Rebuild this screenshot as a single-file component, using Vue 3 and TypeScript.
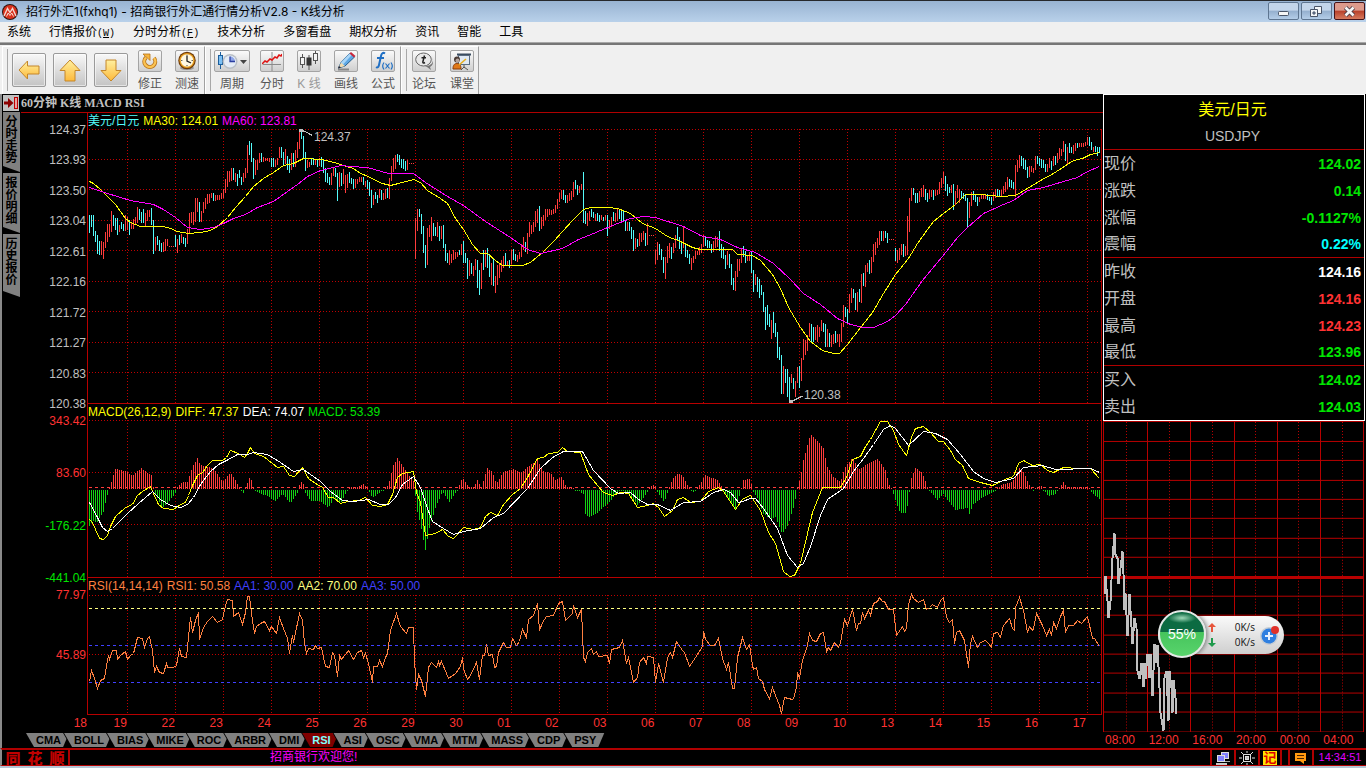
<script setup lang="ts">
interface Segment {
  first: number
  top: number
  bars: string
}
interface Trace {
  left: number
  top: number
  points: string
}
interface Candle {
  x: number
  y: number
  h: number
  kind: string
}

// Samples are stored at three units per pixel, relative to the segment origin.
const UNIT = 3
const FIRST_X = 89
const STEP = 2

const menus = [
  { label: '系统', key: '' },
  { label: '行情报价', key: 'W' },
  { label: '分时分析', key: 'F' },
  { label: '技术分析', key: '' },
  { label: '多窗看盘', key: '' },
  { label: '期权分析', key: '' },
  { label: '资讯', key: '' },
  { label: '智能', key: '' },
  { label: '工具', key: '' },
]

const segments: Segment[] = [
  {
    first: 0,
    top: 90,
    bars:
      'c375-428 375-412 375-437 423-455 435-493 453-495 r453-495 455-507 425-475 402-457 402-440 363-425 c375-407 383-420 383-435 r405-425 c397-417 402-423 r375-423 380-420 c390-435 r400-417 387-417 380-405 350-400 c357-390 365-400 357-400 r370-410 360-392 360-380 c353-405 390-492 r440-482 c437-465 450-482 460-487 r455-487 447-482 447-468 d468-471 468-471 468-471 c435-470 r447-490 c435-465 r433-460 c440-462 443-470 r417-462 370-430 365-400 365-405 323-395 323-367 c335-395 r363-397 335-370 325-357 313-343 313-340 308-325 c308-333 r315-333 315-330 315-330 310-328 298-325 267-310 243-290 243-275 233-272 c235-270 r250-275 c253-287 240-265 262-285 r250-277 233-265 165-250 c153-195 160-215 205-267 r210-255 210-240 190-220 c190-215 r200-215 203-213 203-213 203-215 c203-230 203-230 r210-230 205-225 170-205 c172-203 185-225 r177-223 c197-240 207-250 r190-240 c190-230 r180-230 155-205 125-178 c120-147 137-205 187-243 r210-235 215-230 c205-225 205-225 r210-225 c210-230 r205-227 c200-230 210-250 233-275 250-280 260-285 r250-285 233-257 c233-260 250-333 r245-290',
  },
  {
    first: 126,
    top: 120,
    bars:
      'c158-198 r147-192 165-218 163-205 c155-190 173-193 177-207 r178-205 178-193 172-187 170-187 c172-195 r183-202 c180-207 187-228 210-263 r225-255 c215-237 225-248 r207-233 c210-240 r220-240 207-237 c203-233 r173-237 137-182 115-155 105-147 c102-125 105-135 117-143 118-147 123-152 r120-150 d130-133 130-133 130-133 r293-417 267-333 c267-290 282-342 318-400 375-443 r323-435 315-350 290-362 c308-347 320-347 r305-350 c318-362 r318-357 c315-383 373-423 398-430 r390-435 402-430 390-420 395-417 395-410 c390-405 r372-405 c362-430 398-428 413-477 r420-467 c430-462 r437-468 417-450 c420-503 450-525 r428-507 c390-450 r390-440 c383-443 402-470 r430-495 c415-497 r467-518 435-495 430-475 420-457 407-443 c398-435 r422-437 c420-443 r390-433 c387-420 402-423 r405-425 395-417 372-410 350-390 c365-397 r340-402 305-350 315-343 305-335 273-320 267-308 c258-333 r290-327 285-317 267-300 267-290 267-285 270-285 268-283 255-278 237-267 218-247 210-237 c210-240 225-248 r225-248 220-243 213-240 185-230 c180-208 195-225 r197-218 192-210 c155-310 273-312 r280-318 272-303 c267-290 275-293 r282-302 c280-302 285-305 r285-300 c290-302 r285-300 c285-347 r300-328 290-322 c277-302 r280-305 265-303 c268-298 270-305 273-305 300-333 r307-333 c307-333 322-357 330-392 r355-388 c357-380 r340-377 340-365 333-360 c340-378 r310-375 d346-349 346-349 346-349 r390-432 365-420 c372-405 387-420 410-458 r410-477 377-430 370-413 c380-417 r370-398 345-385 c320-360 352-387 365-402 r322-383 c370-410 390-413 403-432 r413-450 407-430 393-417 393-405 380-405',
  },
  {
    first: 306,
    top: 120,
    bars:
      'r372-400 345-380 c350-377 360-385 363-385 372-400 r362-395 347-383 350-380 c333-392 373-413 380-417 405-447 r392-435 c403-443 432-495 473-510 r453-513 417-470 417-453 385-430 c377-410 393-428 r407-423 397-423 c397-458 450-517 r462-495 c470-517 477-535 495-525 517-575 562-630 555-615 582-620 r600-657 c577-640 610-652 635-713 682-720 705-822 r738-822 c747-788 747-830 770-850 r762-790 c773-807 r783-830 740-790 c738-805 r713-783 657-720 660-705 645-693 610-650 c612-665 620-667 r622-660 615-665 620-650 600-633 c608-637 612-680 r628-680 c640-682 r645-682 642-673 c633-668 r643-665 642-680 608-665 555-620 c560-592 568-613 r522-580 503-548 c507-535 520-570 r515-575 c507-547 r462-550 c458-497 r435-500 430-457 c420-463 r410-458 372-427 365-405 353-385 333-375 c333-362 r333-362 c333-353 340-368 d358-361 358-361 358-361 c385-422 r390-430 385-420 373-405 c373-410 r378-407 288-405 235-335 205-243 c205-225 218-248 218-248 r213-245 205-230 195-230 c207-240 220-245 r210-238 210-230 c210-240 r210-228 210-225 185-223 173-205 155-192 c167-213 193-227 200-220 r195-220 c192-270 r213-255 195-235 208-250 c213-233 220-237 225-243 235-323 r245-293 215-258 c213-240 225-247 230-258 r230-247 225-237 222-237 223-237 c223-240 230-243 232-255 r215-243 208-235 c207-230 210-230 r210-228 197-223 187-215 170-207 c178-200 180-205 185-207 r135-230 120-155 105-143 c107-137 113-147 120-150 140-173 r137-170 137-155 143-160 108-150 c108-133 113-137 117-143 120-143 133-155 r133-155 113-143 c122-150 r107-137 c107-135 r100-130 83-117 87-108 63-95 c72-122 r80-133 c68-98 82-100 r75-102 68-93 c68-85 r68-80 68-82 70-80 65-77 50-75 c50-78 65-90 r80-97 c77-97 80-107 80-100',
  },
]

const candles: Candle[] = segments.flatMap((seg) => {
  let kind = 'r'
  return seg.bars.split(' ').map((token, i) => {
    if (/[a-z]/.test(token[0])) {
      kind = token[0]
      token = token.slice(1)
    }
    const [hi, lo] = token.split('-').map(Number)
    const y = Math.round(seg.top + hi / UNIT)
    return {
      x: FIRST_X + STEP * (seg.first + i),
      y,
      h: Math.max(1, Math.round(seg.top + lo / UNIT) - y),
      kind,
    }
  })
})

function toPoints(traces: Trace[]): number[][] {
  return traces.flatMap((t) =>
    t.points.split(' ').map((p) => {
      const [x, y] = p.split(',').map(Number)
      return [Math.round(t.left + x / UNIT), Math.round(t.top + y / UNIT)]
    }),
  )
}
function line(traces: Trace[]): string {
  return toPoints(traces)
    .map(([x, y]) => `${x + 0.5},${y + 0.5}`)
    .join(' ')
}

const ma30 = line([
  { left: 0, top: 90, points: '268,273 280,278 300,297 325,320 345,342 360,363 375,385 390,397 420,409 490,409 510,415 530,424 565,430 600,426 630,420 650,408 680,380 705,352 735,318 760,288 790,265 820,247 850,225 880,220 908,203 965,206 1010,218' },
  { left: 340, top: 120, points: '10,136 40,145 60,160 85,168 100,178 125,190 150,196 175,188 220,176 240,187 260,210 300,233 320,250 345,293 370,328 395,373 420,400 440,400 465,420 485,434 515,436 545,436 570,427 605,396 640,363 665,333 700,297 730,267 750,260 800,260 830,265 870,280 905,308 945,323 980,348 1020,362 1055,382' },
  { left: 700, top: 120, points: '0,386 95,388 110,402 155,406 180,420 215,462 240,503 265,560 300,620 330,663 365,690 400,700 418,698 440,673 470,633 515,575 550,520 585,462 625,413 650,370 680,327 700,303 730,280 765,252 795,221 840,222 900,227 945,224 980,203 1020,180 1060,158 1120,120 1145,115 1170,103 1198,97' },
])
const ma60 = line([
  { left: 0, top: 90, points: '268,290 320,310 390,330 460,343 490,357 525,382 560,410 600,418 640,412 670,400 700,383 735,373 770,352 820,332 860,302 890,281 920,257 960,240 1000,230' },
  { left: 340, top: 120, points: '0,136 30,138 80,140 145,160 220,160 255,187 320,227 370,255 435,302 510,350 560,388 600,398 665,385 715,356 760,338 815,315 870,295 910,289 945,290 1030,317 1080,346' },
  { left: 700, top: 120, points: '10,348 60,358 110,380 165,396 220,430 270,478 310,520 360,553 410,593 450,612 490,621 520,621 560,602 585,585 615,553 665,480 725,408 770,352 800,322 850,280 910,253 940,240 980,210 1030,200 1090,184 1130,170 1160,154 1198,139' },
])
const diff = line([
  { left: 0, top: 400, points: '268,358 275,365 285,388 298,413 310,418 320,405 330,378 345,348 375,320 395,312 412,285 425,272 450,258 460,280 475,312 490,325 520,328 540,312 555,305 565,285 575,255 590,225 605,215 620,195 635,180 665,180 678,170 690,150 715,158 732,172 740,160 750,142 762,158 790,168 815,188 830,202 850,198 868,226 882,228 905,200 925,235 945,250 965,262 985,292 1000,292 1020,308 1040,302 1075,300 1095,292 1115,315' },
  { left: 380, top: 400, points: '0,317 20,313 35,283 50,230 65,218 98,214 108,275 120,305 135,405 165,398 185,388 205,408 218,415 235,400 250,380 280,388 300,380 315,348 330,335 350,345 370,312 395,283 420,265 440,230 470,175 490,172 505,158 530,155 545,142 560,154 600,156 612,190 625,222 650,255 670,275 695,286 720,275 745,280 770,322 800,316 820,308 835,322 852,347 875,330 890,298 910,292 930,305 960,303 985,272 1015,260 1030,272 1065,328 1085,298' },
  { left: 740, top: 400, points: '15,292 30,285 60,330 85,395 105,428 118,470 130,513 148,528 162,525 180,490 200,400 215,335 235,290 245,260 300,262 318,230 335,178 360,168 375,138 390,118 420,62 440,62 460,90 475,132 498,166 512,112 525,83 550,79 570,97 595,122 610,122 630,150 645,178 665,195 685,235 720,246 757,254 800,233 820,227 835,190 850,180 875,195 900,193 920,211 940,215 970,201 1010,204 1050,203 1078,233' },
])
const dea = line([
  { left: 0, top: 400, points: '268,305 290,350 305,382 320,392 335,385 380,340 415,310 455,273 480,297 510,316 540,320 560,311 580,290 600,253 630,213 655,193 685,178 710,161 740,163 760,156 800,163 840,185 880,214 910,208 960,243 990,273 1025,299 1060,302 1105,296' },
  { left: 380, top: 400, points: '0,312 25,312 45,290 65,253 98,227 120,262 140,325 155,362 190,383 220,403 250,392 300,384 340,352 370,340 440,265 480,205 515,172 550,154 605,154 640,210 690,263 715,278 750,277 775,298 800,313 830,313 870,331 910,306 960,302 1000,275 1030,268 1050,275 1075,305' },
  { left: 740, top: 400, points: '5,303 30,295 45,295 70,325 110,385 140,465 170,502 190,488 210,437 240,345 260,298 310,265 340,213 370,175 400,133 430,88 450,75 465,85 505,135 550,92 585,98 620,117 660,163 700,213 730,235 765,247 820,235 850,202 905,195 945,208 1050,203 1078,216' },
])
const rsi = line([
  { left: 0, top: 570, points: '268,332 274,300 282,325 292,355 300,330 312,325 318,285 323,255 328,268 335,240 347,240 352,268 360,255 375,243 382,268 390,255 398,250 412,200 425,205 431,232 440,203 448,197 455,240 461,305 467,287 478,305 490,310 497,280 502,290 520,290 527,285 538,235 544,258 557,262 563,200 569,142 575,185 585,150 593,125 598,207 608,170 620,152 635,138 650,156 665,147 675,105 682,87 695,90 700,137 713,125 725,163 735,125 742,77 748,77 755,150 761,190 767,168 780,158 792,152 808,180 814,168 828,190 838,140 850,175 862,205 868,248 875,195 880,215 898,130 905,150 912,220 917,248 925,235 938,238 945,225 952,235 962,230 968,262 975,287 987,290 995,245 1003,255 1012,317 1018,255 1022,268 1043,240 1060,268 1072,247 1083,240 1090,262 1096,250 1105,280 1115,335 1120,287 1130,288 1138,270 1145,288 1155,262 1162,250 1170,180' },
  { left: 380, top: 400, points: '47,640 60,677 78,698 85,682 100,682 103,780 107,868 113,823 122,840 135,888 143,800 152,785 167,802 173,782 178,795 184,783 197,820 205,833 225,820 240,798 245,772 250,805 262,838 270,825 287,785 298,838 305,765 311,765 317,732 325,765 335,763 342,800 348,798 355,755 370,727 378,742 390,740 397,715 407,735 418,722 427,687 437,710 443,657 460,645 472,608 478,690 485,667 497,647 520,645 535,610 545,602 555,660 575,640 580,615 592,650 603,627 608,770 616,783 622,755 633,745 640,763 647,752 655,768 680,765 687,790 694,748 716,742 726,720 737,790 743,770 760,845 772,832 778,785 790,770 797,790 802,768 820,770 826,845 833,790 850,845 862,770 870,755 875,770 887,722 905,750 912,755 928,797 945,770 965,737 970,693 975,717 990,735 1002,735 1013,713 1025,775 1037,808 1043,785 1055,863 1061,865 1072,770' },
  { left: 740, top: 400, points: '5,710 18,748 28,733 36,795 40,808 47,800 55,833 65,843 72,868 88,893 95,862 110,900 118,915 124,940 131,892 155,897 160,895 168,860 172,817 178,835 185,780 200,735 208,698 215,720 227,722 240,700 250,695 257,753 263,740 270,750 282,727 295,742 300,725 311,657 322,675 335,627 347,690 353,668 360,670 365,635 371,655 383,630 390,645 400,610 412,603 418,590 425,602 432,602 443,628 460,628 467,705 475,697 485,677 492,692 498,685 505,613 514,583 520,595 533,605 550,597 557,627 567,622 575,613 592,622 600,600 610,590 617,650 628,667 635,657 641,730 647,697 657,690 673,720 683,800 690,730 695,707 712,740 720,727 735,720 745,728 753,742 760,700 770,697 780,710 790,675 808,653 815,683 821,690 826,620 838,592 850,630 862,695 868,677 875,690 880,685 887,640 905,675 918,705 928,687 934,705 940,665 947,683 960,647 970,630 976,697 983,675 1000,675 1010,660 1022,670 1042,648 1055,713 1062,713 1078,737' },
])
const intraday = line([
  { left: 1100, top: 410, points: '12,548 16,495 20,570 24,622 30,570 36,440 41,365 46,430 50,440 55,520 60,470 65,420 68,490 72,598 76,545 82,675 88,550 94,648 97,700 101,620 108,650 112,780 118,805 122,755 128,828 132,755 136,805 140,728 146,800 150,730 157,855 162,700 167,755 172,702 176,830 181,905 188,960 192,800 198,780 205,930 208,780 213,830 217,905 220,806 224,860 227,908' },
])

// MACD histogram: envelope points expanded to one bar per candle.
const ZERO_Y = 489
const envelope = toPoints([
  { left: 0, top: 400, points: '268,375 275,360 290,362 300,345 310,333 318,295 324,268 330,255 345,207 375,213 395,227 412,213 422,205 440,220 452,225 460,262 466,280 485,320 500,305 525,275 532,262 545,245 560,245 575,200 592,173 600,195 640,205 665,247 690,220 705,240 718,262 728,275 740,250 750,228 760,262 775,275 800,285 825,300 845,280 870,305 890,275 895,262 905,240 915,275 930,300 960,300 985,320 1000,295 1020,310 1045,262 1075,262 1090,252 1105,268 1115,290' },
  { left: 380, top: 400, points: '10,268 25,255 40,195 52,173 70,200 90,235 103,245 107,320 120,370 136,447 148,380 165,320 185,272 207,302 225,275 235,262 247,232 265,260 278,262 290,240 302,262 320,205 335,215 347,252 370,215 400,208 420,218 450,195 470,180 490,212 510,220 525,240 545,232 558,262 575,264 598,270 608,280 615,340 625,348 650,335 690,300 720,265 750,285 770,312 790,290 810,262 822,252 835,280 852,302 865,268 880,235 895,220 910,232 925,262 940,272 958,255 975,225 1010,240 1025,262 1045,295 1065,325 1080,275' },
  { left: 740, top: 400, points: '10,240 30,237 36,268 50,290 70,340 90,355 105,348 125,400 145,370 160,320 170,265 180,235 190,180 210,103 230,122 250,145 262,200 280,230 300,245 312,205 335,175 345,190 355,210 385,190 415,178 435,210 447,255 455,270 470,315 480,335 498,335 504,290 512,235 525,203 545,220 560,262 575,280 592,298 610,280 625,300 645,328 680,320 684,345 700,310 730,288 760,272 790,252 815,245 838,203 850,215 870,260 880,268 900,255 925,285 945,278 970,245 980,262 1045,262 1058,280 1080,297' },
])
function envelopeAt(x: number): number {
  const k = envelope.findIndex((p) => p[0] >= x)
  if (k <= 0) return envelope[k === 0 ? 0 : envelope.length - 1][1]
  const [x0, y0] = envelope[k - 1]
  const [x1, y1] = envelope[k]
  return Math.round(y0 + ((y1 - y0) * (x - x0)) / (x1 - x0))
}
const histogram = Array.from({ length: 506 }, (_, i) => {
  const x = FIRST_X + STEP * i
  const y = envelopeAt(x)
  return y < ZERO_Y
    ? { x, y, h: ZERO_Y - y, kind: 'r' }
    : { x, y: ZERO_Y + 1, h: Math.max(1, y - ZERO_Y), kind: 'g' }
})

const days = ['19', '22', '23', '24', '25', '26', '29', '30', '01', '02', '03', '06', '07', '08', '09', '10', '13', '14', '15', '16', '17']
const dayX = days.map((_, i) => 127 + 48 * i)
const priceAxis = ['124.37', '123.93', '123.50', '123.04', '122.61', '122.16', '121.72', '121.27', '120.83', '120.38']
const priceGrid = [129, 159, 189, 220, 250, 281, 311, 342, 372]
const macdAxis = [
  { text: '343.42', kind: 'up' },
  { text: '83.60', kind: 'up' },
  { text: '-176.22', kind: 'down' },
  { text: '-441.04', kind: 'down' },
]
const indicators = ['CMA', 'BOLL', 'BIAS', 'MIKE', 'ROC', 'ARBR', 'DMI', 'RSI', 'ASI', 'OSC', 'VMA', 'MTM', 'MASS', 'CDP', 'PSY']
const sideTabs = ['分时走势', '报价明细', '历史报价']

const quoteGroups = [
  [
    { name: '现价', value: '124.02', kind: 'green' },
    { name: '涨跌', value: '0.14', kind: 'green' },
    { name: '涨幅', value: '-0.1127%', kind: 'green' },
    { name: '震幅', value: '0.22%', kind: 'cyan' },
  ],
  [
    { name: '昨收', value: '124.16', kind: 'white' },
    { name: '开盘', value: '124.16', kind: 'red' },
    { name: '最高', value: '124.23', kind: 'red' },
    { name: '最低', value: '123.96', kind: 'green' },
  ],
  [
    { name: '买入', value: '124.02', kind: 'green' },
    { name: '卖出', value: '124.03', kind: 'green' },
  ],
]
const dayRows = [420, 440, 459, 479, 498, 517, 537, 556, 595, 614, 634, 653, 672, 692, 711, 731]
const daySolid = [1103, 1147, 1190, 1234, 1277, 1320, 1363]
const dayDotted = [1126, 1169, 1212, 1255, 1298, 1342]
const hours = ['08:00', '12:00', '16:00', '20:00', '00:00', '04:00']
</script>

<template>
  <div class="window">
    <header class="titlebar">
      <svg class="logo" viewBox="0 0 16 16" width="16" height="16" aria-hidden="true">
        <circle cx="8" cy="8" r="8" fill="#2a1512" />
        <circle cx="8" cy="8" r="7" fill="#d8301c" />
        <path d="M2 12 5.500 4.500 8 8.500 10.500 4.500 14 12" fill="none" stroke="#f4d8d0" stroke-width="1.400" />
        <path d="M4.500 12.500 6.200 9 8 11.500 9.800 9 11.500 12.500" fill="none" stroke="#f4d8d0" stroke-width="1" />
      </svg>
      <h1>招行外汇1(fxhq1) - 招商银行外汇通行情分析V2.8 - K线分析</h1>
      <div class="controls">
        <button aria-label="最小化">
          <svg viewBox="0 0 31 17" width="31" height="17"><rect x="10.500" y="8.500" width="10" height="4" rx="1" fill="#f6f6f6" stroke="#4a5568" /></svg>
        </button>
        <button aria-label="还原">
          <svg viewBox="0 0 31 17" width="31" height="17" fill="#f4f6f8" stroke="#4a5568">
            <path d="M13.500 3.500h7v7h-7z" /><path d="M9.500 6.500h7v7h-7z" /><path d="M12 9h2v2h-2z" fill="#8fa9c8" />
          </svg>
        </button>
        <button class="close" aria-label="关闭">
          <svg viewBox="0 0 31 17" width="31" height="17"><path d="M11.500 4.500 19.500 12.500M19.500 4.500 11.500 12.500" stroke="#4a3a44" stroke-width="4.500" /><path d="M11.500 4.500 19.500 12.500M19.500 4.500 11.500 12.500" stroke="#f5f5f5" stroke-width="2.600" /></svg>
        </button>
      </div>
    </header>

    <nav class="menubar">
      <button v-for="m in menus" :key="m.label">{{ m.label }}<span v-if="m.key" class="key">(<u>{{ m.key }}</u>)</span></button>
    </nav>

    <div class="toolbar">
      <div class="group nav-group">
        <button class="big" aria-label="后退">
          <svg viewBox="0 0 24 24" width="24" height="24"><path d="M2 12 10.500 3v5H22v8H10.500v5z" fill="url(#gold)" stroke="#c4862a" stroke-linejoin="round" /></svg>
        </button>
        <button class="big" aria-label="上一个">
          <svg viewBox="0 0 24 24" width="24" height="24"><path d="M12 2 22 12.500h-5V23H7V12.500H2z" fill="url(#gold)" stroke="#c4862a" stroke-linejoin="round" /></svg>
        </button>
        <button class="big" aria-label="下一个">
          <svg viewBox="0 0 24 24" width="24" height="24"><path d="M12 23 22 12.500h-5V2H7v10.500H2z" fill="url(#gold)" stroke="#c4862a" stroke-linejoin="round" /></svg>
        </button>
        <button class="tool">
          <span class="face">
            <svg viewBox="0 0 20 20" width="20" height="20"><path d="M6 6.500A5.500 5.500 0 1 0 14 7" fill="none" stroke="#b8741c" stroke-width="4" /><path d="M6 6.500A5.500 5.500 0 1 0 14 7" fill="none" stroke="#fbc352" stroke-width="2.400" /><path d="M3 3h7v6.500L7.800 7.300 5.500 5.500z" fill="#f7b53c" stroke="#b8741c" stroke-width=".8" /></svg>
          </span>修正
        </button>
        <button class="tool">
          <span class="face">
            <svg viewBox="0 0 20 20" width="20" height="20"><ellipse cx="10" cy="17" rx="7" ry="2" fill="#999" /><circle cx="10" cy="9.500" r="8.700" fill="#6e3a08" /><circle cx="10" cy="9.500" r="7.600" fill="#e8a020" /><circle cx="10" cy="9.500" r="6.200" fill="#fff8e0" /><path d="M10 5v5l4 2" fill="none" stroke="#222" stroke-width="1.300" /><path d="M10 3.800v1M10 14.200v1M4.300 9.500h1M14.700 9.500h1" stroke="#222" /></svg>
          </span>测速
        </button>
      </div>
      <div class="group">
        <button class="tool wide">
          <span class="face">
            <svg viewBox="0 0 32 20" width="32" height="20"><path d="M4.500 1v17" stroke="#1d5f9c" /><rect x="2.500" y="4.500" width="4" height="9" fill="#7cc0f4" stroke="#1d5f9c" /><circle cx="14" cy="10.500" r="7.500" fill="#b9bfc6" /><circle cx="14" cy="10.500" r="6" fill="#e4ecf6" /><path d="M14 5.500a5 5 0 0 1 5 5h-5z" fill="#8fa6e8" /><path d="M14 5.500v5h5" fill="none" stroke="#2c3fa0" stroke-width="1.300" /><path d="M24 9h7l-3.500 4z" fill="#444" /></svg>
          </span>周期
        </button>
        <button class="tool">
          <span class="face">
            <svg viewBox="0 0 20 20" width="20" height="20"><path d="M10 1v19M1 13.500h18" stroke="#8a8a8a" /><path d="M0 13 3 10l2 1 3-3 2 1 3-3 2 1 2-3 2 1 1-2" fill="none" stroke="#e01414" stroke-width="1.500" /></svg>
          </span>分时
        </button>
        <button class="tool" disabled>
          <span class="face">
            <svg viewBox="0 0 20 20" width="20" height="20"><path d="M3.500 3v14M10 4v15M16.500 0v13" stroke="#555" /><rect x="1.500" y="6.500" width="4" height="7" fill="#f4f4f4" stroke="#555" /><rect x="7.500" y="6.500" width="5" height="8" fill="#333" /><rect x="14.500" y="2.500" width="4" height="7" fill="#f4f4f4" stroke="#555" /></svg>
          </span>K 线
        </button>
        <button class="tool">
          <span class="face">
            <svg viewBox="0 0 20 20" width="20" height="20"><path d="M2 18.500h11" stroke="#888" stroke-width="2" /><path d="M2.500 17 5 11.500 14 2l4.500 4L9 15z" fill="#5fa8e4" stroke="#28608f" /><path d="M5 11.500 14 2l2 1.800L7 13.500z" fill="#a9d6f8" /><path d="M13.500 2.500 15 1l4.500 4-1.500 1.500z" fill="#c8283c" /><path d="M2.500 17 5 11.500 9 15z" fill="#f4dcae" /><path d="M2 17.500l1-2.500 2 1.500z" fill="#223" /></svg>
          </span>画线
        </button>
        <button class="tool">
          <span class="face">
            <svg viewBox="0 0 20 20" width="20" height="20" fill="none" stroke="#1f6fc4"><path d="M12 2.500c-2-1.500-3.500 0-4 2.500L6 14c-.5 2.200-1.600 3-3 2.200M4 7h7" stroke-width="2" /><path d="M11 11.500c-1.500 2-1.500 5 0 7M18 11.500c1.500 2 1.500 5 0 7M12.500 12.500l4 5M16.500 12.500l-4 5" stroke-width="1.200" /></svg>
          </span>公式
        </button>
      </div>
      <div class="group last">
        <button class="tool">
          <span class="face">
            <svg viewBox="0 0 20 20" width="20" height="20"><path d="M11 15a7 5.500 0 0 0 7-8l1 3c.4 3-1 5-3 6l1 3-4-3z" fill="#777" /><ellipse cx="9.500" cy="8.500" rx="7.800" ry="6.500" fill="#e8e8e8" stroke="#666" /><path d="M10.500 4.500 8.800 11c0 1.200 1 1.200 2.200.5M7.500 6.700h4.500" fill="none" stroke="#222" stroke-width="1.500" /></svg>
          </span>论坛
        </button>
        <button class="tool">
          <span class="face">
            <svg viewBox="0 0 20 20" width="20" height="20"><path d="M5 3.500h14" stroke="#3a4c60" stroke-width="2" /><rect x="6.500" y="4.500" width="11" height="9" fill="#dfe9f4" stroke="#5a6c80" /><path d="M12 14v3M9 19l3-3 4 3" fill="none" stroke="#555" /><circle cx="5" cy="8.500" r="3" fill="#4a3a34" /><circle cx="5.500" cy="9.500" r="2" fill="#b4a49c" /><path d="M1 18c0-4 1.500-5.500 4-5.500s4 1.500 4 5.500z" fill="#e07818" stroke="#8a3c08" /><path d="M7 14 14 8" stroke="#e8b020" stroke-width="1.600" /></svg>
          </span>课堂
        </button>
      </div>
      <svg class="defs" width="0" height="0" aria-hidden="true">
        <linearGradient id="gold" x1="0" y1="0" x2="0" y2="1"><stop offset="0" stop-color="#fff0a0" /><stop offset="1" stop-color="#fdb93a" /></linearGradient>
      </svg>
    </div>

    <main class="workspace">
      <aside class="side">
        <button class="expand" aria-label="展开">
          <svg viewBox="0 0 16 16" width="16" height="16"><path d="M1 6.500h4V3l5.500 5L5 13V9.500H1z" fill="#8c0000" /><rect x="11.500" y="2.500" width="3" height="11" fill="#e8a0a0" stroke="#c00000" /></svg>
        </button>
        <button v-for="t in sideTabs" :key="t" class="side-tab">{{ t }}</button>
      </aside>

      <section class="charts">
        <h2>60分钟 K线 MACD RSI</h2>

        <div class="panel price">
          <div class="axis"><span v-for="p in priceAxis" :key="p">{{ p }}</span></div>
          <div class="plot">
            <svg viewBox="87 113 1016 291" preserveAspectRatio="none" shape-rendering="crispEdges" aria-hidden="true">
              <g class="dots">
                <path v-for="y in priceGrid" :key="'h' + y" :d="`M89 ${y + 0.5}H1101`" />
                <path v-for="x in dayX" :key="'v' + x" :d="`M${x + 0.5} 129V403`" />
              </g>
              <rect v-for="c in candles" :key="c.x" :x="c.x" :y="c.y" width="1" :height="c.h" :class="'bar-' + c.kind" />
              <polyline :points="ma30" class="trace" stroke="#ffff00" />
              <polyline :points="ma60" class="trace" stroke="#ff00ff" />
              <path d="M87.500 113V404M87 403.500H1102M1101.500 129V404" class="frame" />
              <path d="M300 131.500h4M301 129.500 312.500 135.500M789.500 402.500 802.500 396" stroke="#c0c0c0" fill="none" />
              <rect x="299" y="129" width="4" height="3" fill="#c0c0c0" /><rect x="789" y="400" width="4" height="3" fill="#c0c0c0" />
              <text x="314" y="141">124.37</text>
              <text x="804" y="399">120.38</text>
            </svg>
            <p class="legend"><span class="aqua">美元/日元</span><span class="yellow">MA30: 124.01</span><span class="magenta">MA60: 123.81</span></p>
          </div>
        </div>

        <div class="panel macd">
          <div class="axis"><span v-for="a in macdAxis" :key="a.text" :class="a.kind">{{ a.text }}</span></div>
          <div class="plot">
            <svg viewBox="87 404 1016 174" preserveAspectRatio="none" shape-rendering="crispEdges" aria-hidden="true">
              <g class="dots">
                <path v-for="y in [420, 472, 524]" :key="y" :d="`M89 ${y + 0.5}H1101`" />
                <path v-for="x in dayX" :key="'v' + x" :d="`M${x + 0.5} 420V577`" />
              </g>
              <path d="M89 487.500H1100" stroke="#ff3c3c" stroke-dasharray="3 3" />
              <rect v-for="b in histogram" :key="b.x" :x="b.x" :y="b.y" width="1" :height="b.h" :class="'bar-' + b.kind" />
              <polyline :points="diff" class="trace" stroke="#ffff00" />
              <polyline :points="dea" class="trace" stroke="#ffffff" />
              <path d="M87.500 404V578M87 577.500H1102M1101.500 404V578" class="frame" />
            </svg>
            <p class="legend"><span class="yellow">MACD(26,12,9)</span><span class="yellow">DIFF: 47.37</span><span class="white">DEA: 74.07</span><span class="down">MACD: 53.39</span></p>
          </div>
        </div>

        <div class="panel rsi">
          <div class="axis"><span class="up">77.97</span><span class="up">45.89</span></div>
          <div class="plot">
            <svg viewBox="87 578 1016 137" preserveAspectRatio="none" shape-rendering="crispEdges" aria-hidden="true">
              <g class="dots">
                <path v-for="y in [595, 654]" :key="y" :d="`M89 ${y + 0.5}H1101`" />
                <path v-for="x in dayX" :key="'v' + x" :d="`M${x + 0.5} 595V714`" />
              </g>
              <g stroke-dasharray="3 3">
                <path d="M89 608.500H1100" stroke="#ffff80" />
                <path d="M89 645.500H1100M89 682.500H1100" stroke="#4040ff" />
              </g>
              <polyline :points="rsi" class="trace" stroke="#ff8040" />
              <path d="M87.500 578V715M87 714.500H1102M1101.500 578V715" class="frame" />
            </svg>
            <p class="legend"><span class="orange">RSI(14,14,14)</span><span class="orange">RSI1: 50.58</span><span class="blue">AA1: 30.00</span><span class="pale">AA2: 70.00</span><span class="blue">AA3: 50.00</span></p>
          </div>
        </div>

        <div class="dates">
          <span class="origin">18</span>
          <span v-for="(d, i) in days" :key="d" :class="{ short: i === 0 }">{{ d }}</span>
        </div>

        <nav class="indicators">
          <button v-for="t in indicators" :key="t" :class="{ active: t === 'RSI' }"><span>{{ t }}</span></button>
        </nav>
      </section>

      <section class="quotes">
        <div class="board">
          <div class="pair"><h3>美元/日元</h3><p>USDJPY</p></div>
          <table>
            <tbody v-for="(g, i) in quoteGroups" :key="i">
              <tr v-for="q in g" :key="q.name"><th scope="row">{{ q.name }}</th><td :class="q.kind">{{ q.value }}</td></tr>
            </tbody>
          </table>
        </div>
        <div class="day">
          <svg viewBox="1103 420 262 312" preserveAspectRatio="none" shape-rendering="crispEdges" aria-hidden="true">
            <g class="dots"><path v-for="x in dayDotted" :key="x" :d="`M${x + 0.5} 421V731`" /></g>
            <g class="frame">
              <path v-for="y in dayRows" :key="y" :d="`M1103 ${y + 0.5}H1364`" />
              <path v-for="x in daySolid" :key="x" :d="`M${x + 0.5} 420V732`" />
              <path d="M1103 576.500H1364" stroke-width="3" />
            </g>
            <polyline :points="intraday" class="trace thick" stroke="#c0c0c0" />
          </svg>
        </div>
        <div class="hours"><span v-for="h in hours" :key="h">{{ h }}</span></div>
      </section>
    </main>

    <footer class="status">
      <strong class="brand"><span>同</span><span>花</span><span>顺</span></strong>
      <span class="ticker">招商银行欢迎您!</span>
      <span class="cell w24">
        <svg viewBox="0 0 16 14" width="16" height="14" shape-rendering="crispEdges"><rect x="6.500" y="1.500" width="7" height="6" fill="#8080ff" stroke="#ddd" /><path d="M8 10.500h7" stroke="#aaa" /><rect x="2.500" y="4.500" width="7" height="6" fill="#8080ff" stroke="#ddd" /><path d="M1 12.500h11" stroke="#c8c8c8" stroke-width="2" /></svg>
      </span>
      <span class="cell w24">
        <svg viewBox="0 0 16 14" width="16" height="14" stroke="#ddd" fill="none"><rect x="4.500" y="3.500" width="7" height="7" /><rect x="6.500" y="5.500" width="3" height="3" fill="#bbb" /><path d="M8 0v2M8 12v2M0 7h3M13 7h3M2 1l2 2M14 1l-2 2M2 13l2-2M14 13l-2-2" /></svg>
      </span>
      <span class="cell note"><b>记</b></span>
      <span class="cell w8"></span>
      <span class="cell w24">
        <svg viewBox="0 0 14 14" width="14" height="14"><path d="M1 2h11v8H10v3L6 10H1z" fill="#ff9a10" /><path d="M3 4.500h7M3 7.500h7" stroke="#4a2400" /></svg>
      </span>
      <time class="cell">14:34:51</time>
    </footer>
    <div class="sill"></div>

    <aside class="meter">
      <div class="pill">
        <div class="rates">
          <span><svg viewBox="0 0 8 9" width="8" height="9"><path d="M4 0 8 4H5v5H3V4H0z" fill="#e8563c" /></svg>0K/s</span>
          <span><svg viewBox="0 0 8 9" width="8" height="9"><path d="M4 9 8 5H5V0H3v5H0z" fill="#1f9a4c" /></svg>0K/s</span>
        </div>
        <button aria-label="加速">
          <svg viewBox="0 0 20 20" width="20" height="20"><circle cx="9" cy="11" r="9" fill="#c4ccd4" /><circle cx="9" cy="11" r="7.500" fill="#2f7fe0" /><path d="M9 7v8M5 11h8" stroke="#e6f0ff" stroke-width="2" /><circle cx="15" cy="5" r="4" fill="#e03028" /></svg>
        </button>
      </div>
      <div class="ball">55%</div>
    </aside>
  </div>
</template>

<style>
html,
body {
  background: #000;
}
</style>

<style scoped>
.window {
  position: relative;
  display: flex;
  flex-direction: column;
  min-height: 100vh;
  box-sizing: border-box;
  overflow: hidden;
  background: #000;
  color: #c0c0c0;
  font: 12px/14px 'Liberation Sans', 'Noto Sans CJK SC', sans-serif;
}
button {
  margin: 0;
  padding: 0;
  border: 0;
  background: none;
  color: inherit;
  font: inherit;
}
h1,
h2,
h3,
p {
  margin: 0;
  font-weight: normal;
}
svg {
  display: block;
}
.titlebar {
  display: flex;
  align-items: center;
  height: 22px;
  box-sizing: border-box;
  border-top: 1px solid #26282c;
  padding-left: 2px;
  background: linear-gradient(#98b3d2, #b9d1ea);
}
.titlebar h1 {
  flex: 1;
  margin-left: 8px;
  color: #000;
  font: 12px/18px Inter, 'Noto Sans CJK SC', sans-serif;
}
.controls {
  display: flex;
  gap: 2px;
  margin: 0 1px 1px 0;
}
.controls button {
  border: 1px solid #5e7590;
  border-radius: 2px;
  height: 18px;
  width: 31px;
  overflow: hidden;
  background: linear-gradient(#c3d5ea 45%, #94afce 50%, #b4cde8);
}
.controls svg {
  margin-left: -1px;
}
.controls .close {
  border-color: #46141a;
  background: linear-gradient(#dd9a8c 45%, #b8402a 50%, #d67a5e);
}
.menubar {
  display: flex;
  gap: 18px;
  height: 20px;
  padding-left: 7px;
  border-bottom: 1px solid #a8a8a8;
  background: #f0f0f0;
  color: #000;
  line-height: 18px;
}
.key {
  font: 10px/10px 'Liberation Mono', monospace;
}
.toolbar {
  display: flex;
  height: 51px;
  box-sizing: border-box;
  border-top: 2px solid #767676;
  padding-left: 2px;
  background: #f0f0f0;
  color: #555;
}
.group {
  display: flex;
  gap: 13px;
  margin-top: 1px;
  border-right: 1px solid #a0a0a0;
  border-left: 1px solid #fff;
  border-top: 1px solid #fff;
  padding: 3px 5px 0 8px;
  background: linear-gradient(#a8a8a8, #a8a8a8) 4px 2px / 1px 42px no-repeat;
}
.nav-group {
  padding-left: 9px;
}
.nav-group .big + .big {
  margin-left: -6px;
}
.nav-group .big + .tool {
  margin-left: -3px;
}
.group.last {
  gap: 14px;
  padding: 3px 4px 0 10px;
}
.big {
  display: grid;
  place-items: center;
  width: 34px;
  height: 34px;
  margin-top: 3px;
  border: 1px solid #9a9a9a;
  border-radius: 2px;
  background: linear-gradient(#f8f8f8, #c4c4c4);
  box-shadow: inset 0 0 0 1px #fff8;
}
.tool {
  display: flex;
  flex-direction: column;
  align-items: center;
  justify-content: flex-start;
  width: 24px;
  line-height: 24px;
  white-space: nowrap;
}
.tool.wide,
.tool.wide .face {
  width: 36px;
}
.tool.wide {
  margin-right: -3px;
}
.tool .face {
  display: grid;
  place-items: center;
  width: 24px;
  height: 24px;
  box-sizing: border-box;
  border: 1px solid #a4a4a4;
  border-radius: 2px;
  background: linear-gradient(#fafafa, #cfcfcf);
}
.tool:disabled {
  color: #999;
}
.workspace {
  display: flex;
  flex: 1;
  border-left: 2px solid #8a8a8a;
}
.side {
  display: flex;
  flex-direction: column;
  gap: 1px;
  width: 19px;
}
.expand {
  width: 16px;
  height: 16px;
  margin: 1px 0 0 1px;
  background: #c0c0c0;
}
.side-tab {
  width: 17px;
  margin-left: 1px;
  height: 60px;
  box-sizing: border-box;
  padding: 0 2px 6px;
  background: #808080;
  color: #000;
  font: bold 12px/12px 'Noto Sans CJK SC', sans-serif;
  word-break: break-all;
  clip-path: polygon(0 0, 100% 0, 100% 100%, 0 calc(100% - 6px));
}
.side-tab:last-child {
  height: 63px;
  padding-bottom: 10px;
}
.charts {
  display: flex;
  flex: 1;
  flex-direction: column;
  min-width: 0;
}
.charts h2 {
  height: 18px;
  border-bottom: 1px solid #b00000;
  font: bold 12px/18px 'Liberation Serif', 'Noto Sans CJK SC', serif;
}
.panel {
  display: flex;
}
.price {
  flex: 291 1 0;
}
.macd {
  flex: 174 1 0;
}
.rsi {
  flex: 137 1 0;
}
.axis {
  display: flex;
  flex-direction: column;
  justify-content: space-between;
  width: 66px;
  box-sizing: border-box;
  padding: 10px 1px 0 0;
  margin-bottom: -7px;
  text-align: right;
}
.rsi .axis {
  margin-bottom: 53px;
}
.up {
  color: #ff3232;
}
.down {
  color: #00e600;
}
.plot {
  position: relative;
  flex: 1;
}
.plot svg {
  position: absolute;
  inset: 0;
  width: 100%;
  height: 100%;
}
.plot text {
  fill: #c0c0c0;
}
.legend {
  position: relative;
  display: flex;
  gap: 4px;
  padding-left: 1px;
  line-height: 17px;
}
.legend .aqua {
  color: #54fcfc;
}
.yellow {
  color: #ffff00;
}
.magenta {
  color: #ff00ff;
}
.orange {
  color: #ff8040;
}
.blue {
  color: #4040ff;
}
.pale {
  color: #ffff80;
}
.dots path {
  fill: none;
  stroke: #c00000;
  stroke-dasharray: 1 2;
}
.frame {
  fill: none;
  stroke: #b80000;
}
.trace {
  fill: none;
  stroke-width: 1;
}
.thick {
  stroke-width: 2;
}
.bar-r,
.bar-d {
  fill: #ff3c3c;
}
.bar-c {
  fill: #54fcfc;
}
.bar-g {
  fill: #14d214;
}
.dates {
  display: flex;
  height: 18px;
  padding-right: 17px;
  color: #ff3232;
  line-height: 16px;
  text-align: right;
}
.dates span {
  flex: 48 1 0;
}
.dates .origin {
  flex: none;
  width: 66px;
}
.dates .short {
  flex: 40 1 0;
}
.indicators {
  display: flex;
  height: 15px;
  padding-left: 4px;
}
.indicators button {
  margin-right: -7px;
  height: 14px;
  background: #000;
  color: #000;
  font: bold 11px/14px 'Liberation Sans', sans-serif;
  clip-path: polygon(0 0, 100% 0, calc(100% - 6px) 100%, 8px 100%);
}
.indicators span {
  display: block;
  padding: 0 9px 0 11px;
  background: #808080;
  clip-path: polygon(1px 0, calc(100% - 1px) 0, calc(100% - 7px) 100%, 9px 100%);
}
.indicators .active {
  position: relative;
}
.indicators .active ~ button {
  margin-right: -6px;
}
.indicators .active span {
  background: #800000;
  color: #80ffff;
}
.quotes {
  display: flex;
  flex-direction: column;
  width: 262px;
  margin-right: 1px;
}
.board {
  border: 1px solid #fff;
}
.pair {
  height: 54px;
  padding-right: 3px;
  text-align: center;
}
.pair h3 {
  padding-top: 3px;
  color: #ffff00;
  font-size: 16px;
  line-height: 24px;
}
.pair p {
  font-size: 14px;
  line-height: 28px;
}
table {
  width: 100%;
  border-collapse: collapse;
}
tbody {
  border-top: 1px solid #b00000;
}
th,
td {
  box-sizing: border-box;
  height: 27px;
  padding: 1px 3px 0 0;
}
th {
  font-size: 16px;
  font-weight: normal;
  text-align: left;
}
td {
  font-size: 14px;
  font-weight: bold;
  text-align: right;
}
.green {
  color: #00e600;
}
.cyan {
  color: #00ffff;
}
.white {
  color: #fff;
}
.red {
  color: #ff3232;
}
.day {
  position: relative;
  flex: 1;
}
.day svg {
  position: absolute;
  width: 100%;
  height: 100%;
}
.hours {
  display: flex;
  height: 16px;
  color: #ff3232;
  line-height: 16px;
}
.hours span {
  flex: 1;
  padding-left: 2px;
}
.status {
  display: flex;
  height: 15px;
  border-top: 2px solid #b00000;
  border-bottom: 1px solid #b00000;
  border-left: 2px solid #8a8a8a;
  line-height: 15px;
}
.brand {
  display: flex;
  justify-content: space-around;
  width: 66px;
  border-right: 2px solid #b00000;
  color: #c00000;
  font: 900 15px/15px 'Noto Sans CJK SC', sans-serif;
}
.ticker {
  flex: 1;
  padding-left: 200px;
  color: #ff00ff;
}
.cell {
  display: grid;
  place-items: center;
  border-left: 2px solid #b00000;
}
.w24 {
  width: 22px;
}
.w8 {
  width: 6px;
}
.note {
  width: 20px;
}
.note b {
  width: 14px;
  background: #ffe600;
  color: #e00000;
  font-size: 13px;
  line-height: 14px;
  text-align: center;
}
time.cell {
  width: 52px;
  color: #e000ff;
  font-size: 11px;
}
.sill {
  height: 2px;
  background: #b4c4d4;
}
.meter {
  position: absolute;
  top: 616px;
  right: 82px;
}
.pill {
  display: flex;
  align-items: center;
  justify-content: flex-end;
  gap: 5px;
  width: 126px;
  height: 38px;
  box-sizing: border-box;
  padding-right: 4px;
  border-radius: 19px;
  background: linear-gradient(#fafafa, #cfcfcf);
  color: #111;
  font: 10px/15px 'Open Sans', sans-serif;
}
.rates span {
  display: flex;
  align-items: center;
  justify-content: space-between;
  width: 47px;
}
.ball {
  position: absolute;
  top: -6px;
  left: 0;
  width: 48px;
  height: 48px;
  box-sizing: border-box;
  border: 2px solid #e4e8e6;
  border-radius: 50%;
  background: radial-gradient(ellipse 14px 5px at 50% 6px, #9fd8b8, transparent), linear-gradient(#0c6b42 0 45%, #46c45c 46%, #58d46c);
  box-shadow: 2px 0 4px #0006;
  color: #fff;
  font: 14px/44px 'Liberation Sans', sans-serif;
  text-align: center;
}
</style>
